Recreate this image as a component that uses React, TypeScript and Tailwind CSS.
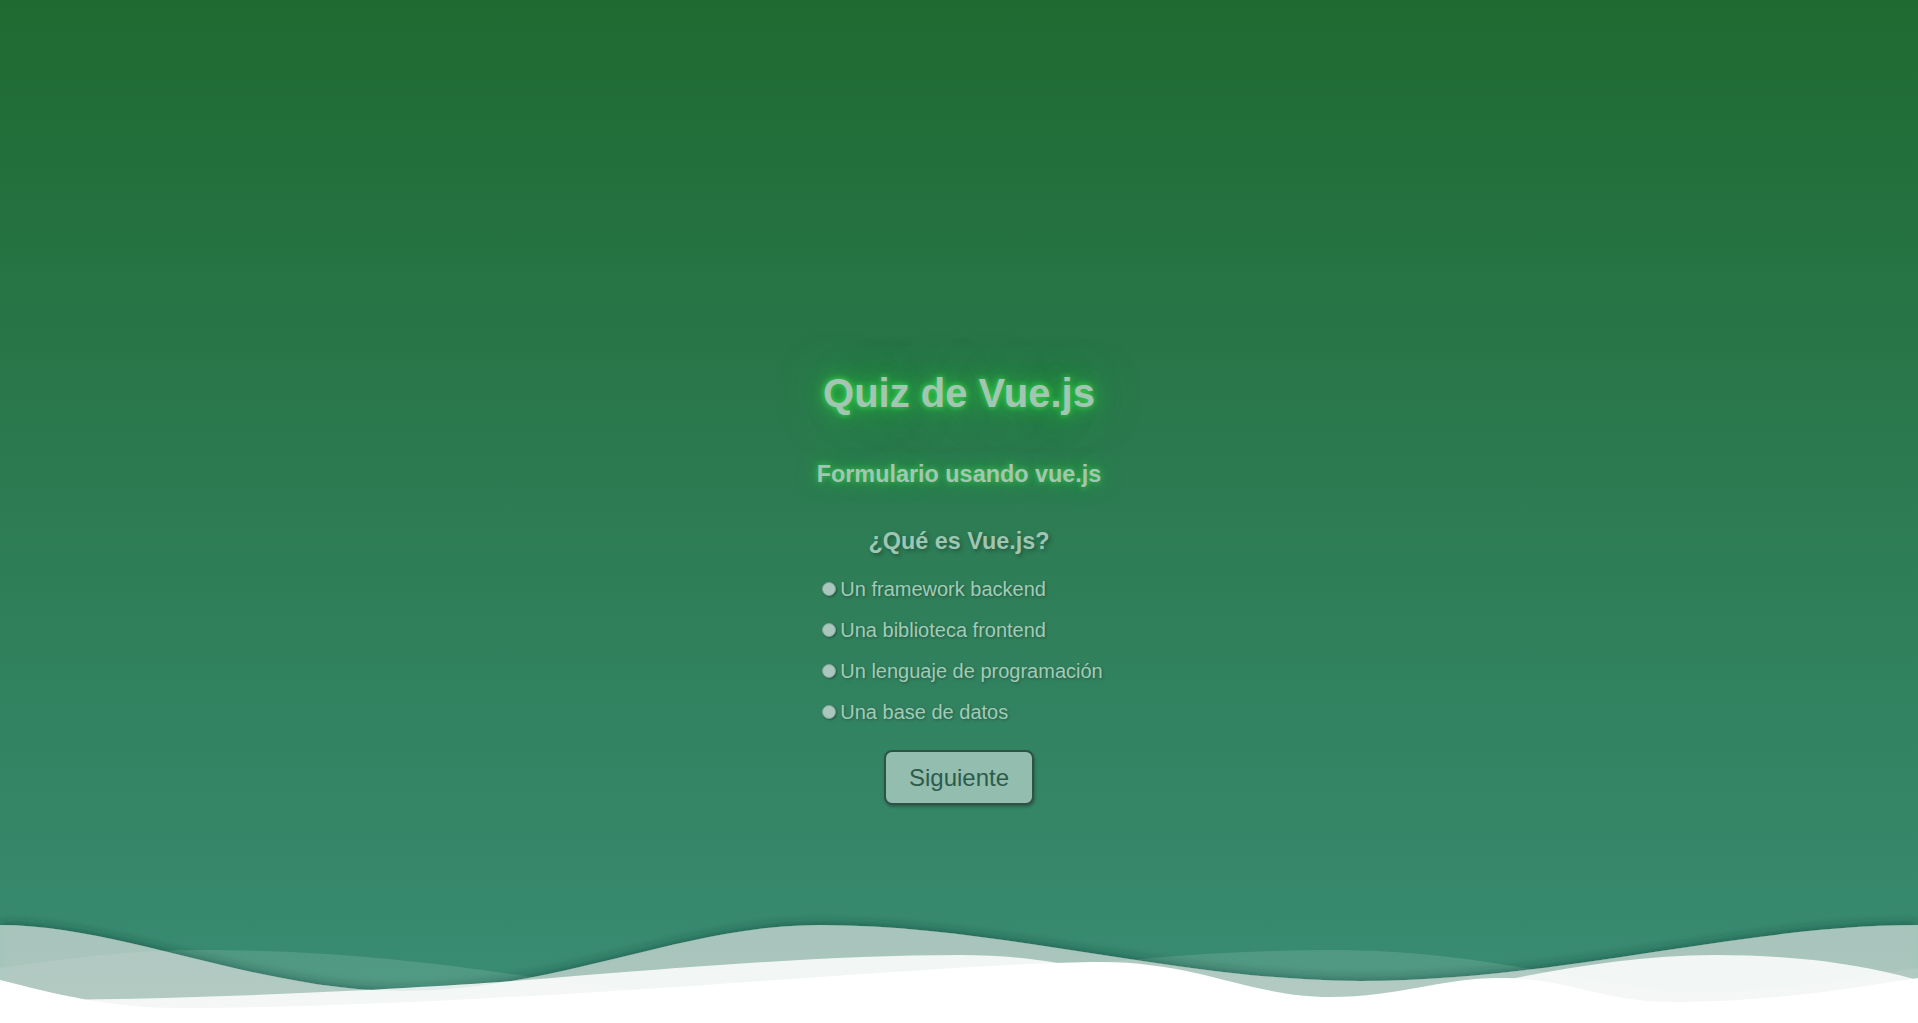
import React from "react";

const options = [
  "Un framework backend",
  "Una biblioteca frontend",
  "Un lenguaje de programación",
  "Una base de datos",
];

const Waves = () => {
  return (
    <svg
      className="block w-full h-[133px] shrink-0 overflow-visible"
      viewBox="0 890 1918 133"
      preserveAspectRatio="none"
    >
      <defs>
        <filter id="waveShadow" x="-5%" y="-60%" width="110%" height="220%">
          <feDropShadow dx="0" dy="-3" stdDeviation="5" floodColor="#0b2a2a" floodOpacity="0.7" />
        </filter>
      </defs>
      <path
        d="M0 968 C70 958 130 950 200 950 C450 950 580 995 720 995 C900 995 1100 950 1330 950 C1500 950 1600 992 1700 992 C1800 992 1870 975 1918 968 L1918 1023 L0 1023 Z"
        fill="#ffffff"
        fillOpacity="0.12"
      />
      <path
        d="M0 925 C120 925 260 991 400 991 C560 991 680 925 820 925 C1000 925 1180 981 1360 981 C1560 981 1740 925 1918 925 L1918 1023 L0 1023 Z"
        fill="#ffffff"
        fillOpacity="0.5"
        filter="url(#waveShadow)"
      />
      <path
        d="M0 1000 C200 1000 380 990 500 982 C600 975 800 955 960 955 C1120 955 1180 1012 1300 1012 C1400 1012 1560 955 1714 955 C1820 955 1880 970 1918 980 L1918 1023 L0 1023 Z"
        fill="#ffffff"
        fillOpacity="0.85"
      />
      <path
        d="M0 980 C60 995 110 1008 180 1008 C500 1008 950 962 1100 962 C1200 962 1250 997 1330 997 C1400 997 1440 978 1500 978 C1570 978 1600 1002 1674 1002 C1780 1002 1870 985 1918 978 L1918 1023 L0 1023 Z"
        fill="#ffffff"
      />
    </svg>
  );
};

export default function App() {
  return (
    <div className="h-screen w-full overflow-hidden flex flex-col bg-[linear-gradient(to_bottom,#1f6a31,#3a8d75)] font-['Liberation_Sans',Arial,sans-serif]">
      <main className="flex-1 flex flex-col items-center pt-[370px]">
        <h1 className="text-[40px] leading-[46px] font-bold text-[#a3c6b3] [text-shadow:0_0_6px_rgba(60,230,80,0.9),0_0_20px_rgba(40,210,60,0.85),0_0_45px_rgba(40,200,60,0.6)]">
          Quiz de Vue.js
        </h1>
        <h2 className="mt-[44px] text-[23.4px] leading-[28px] font-bold text-[#a3c6b2] [text-shadow:0_0_6px_rgba(60,230,80,0.7),0_0_20px_rgba(40,210,60,0.65)]">
          Formulario usando vue.js
        </h2>
        <h3 className="mt-[39px] text-[23.4px] leading-[28px] font-bold text-[#9fc6b2] [text-shadow:2px_2px_4px_rgba(0,0,0,0.3)]">
          ¿Qué es Vue.js?
        </h3>
        <div className="mt-[22px] flex flex-col items-start gap-[17px]">
          {options.map((o) => (
            <label key={o} className="flex items-center h-[24px] text-[20px] leading-[24px] text-[#a2cbb8] [text-shadow:1px_1px_3px_rgba(0,0,0,0.3)]">
              <span className="ml-[7px] mr-[4px] w-[14px] h-[14px] rounded-full bg-[#a9c7bd] border border-[#86a399] shadow-[1px_1px_2px_rgba(0,0,0,0.3)]" />
              {o}
            </label>
          ))}
        </div>
        <button className="mt-[26px] px-[23px] py-[12px] border-2 border-[#2f5247] rounded-[8px] bg-[#93bdae] text-[24px] leading-[27px] text-[#2c5b4c] shadow-[1px_2px_3px_rgba(0,0,0,0.25)]">
          Siguiente
        </button>
      </main>
      <Waves />
    </div>
  );
}
